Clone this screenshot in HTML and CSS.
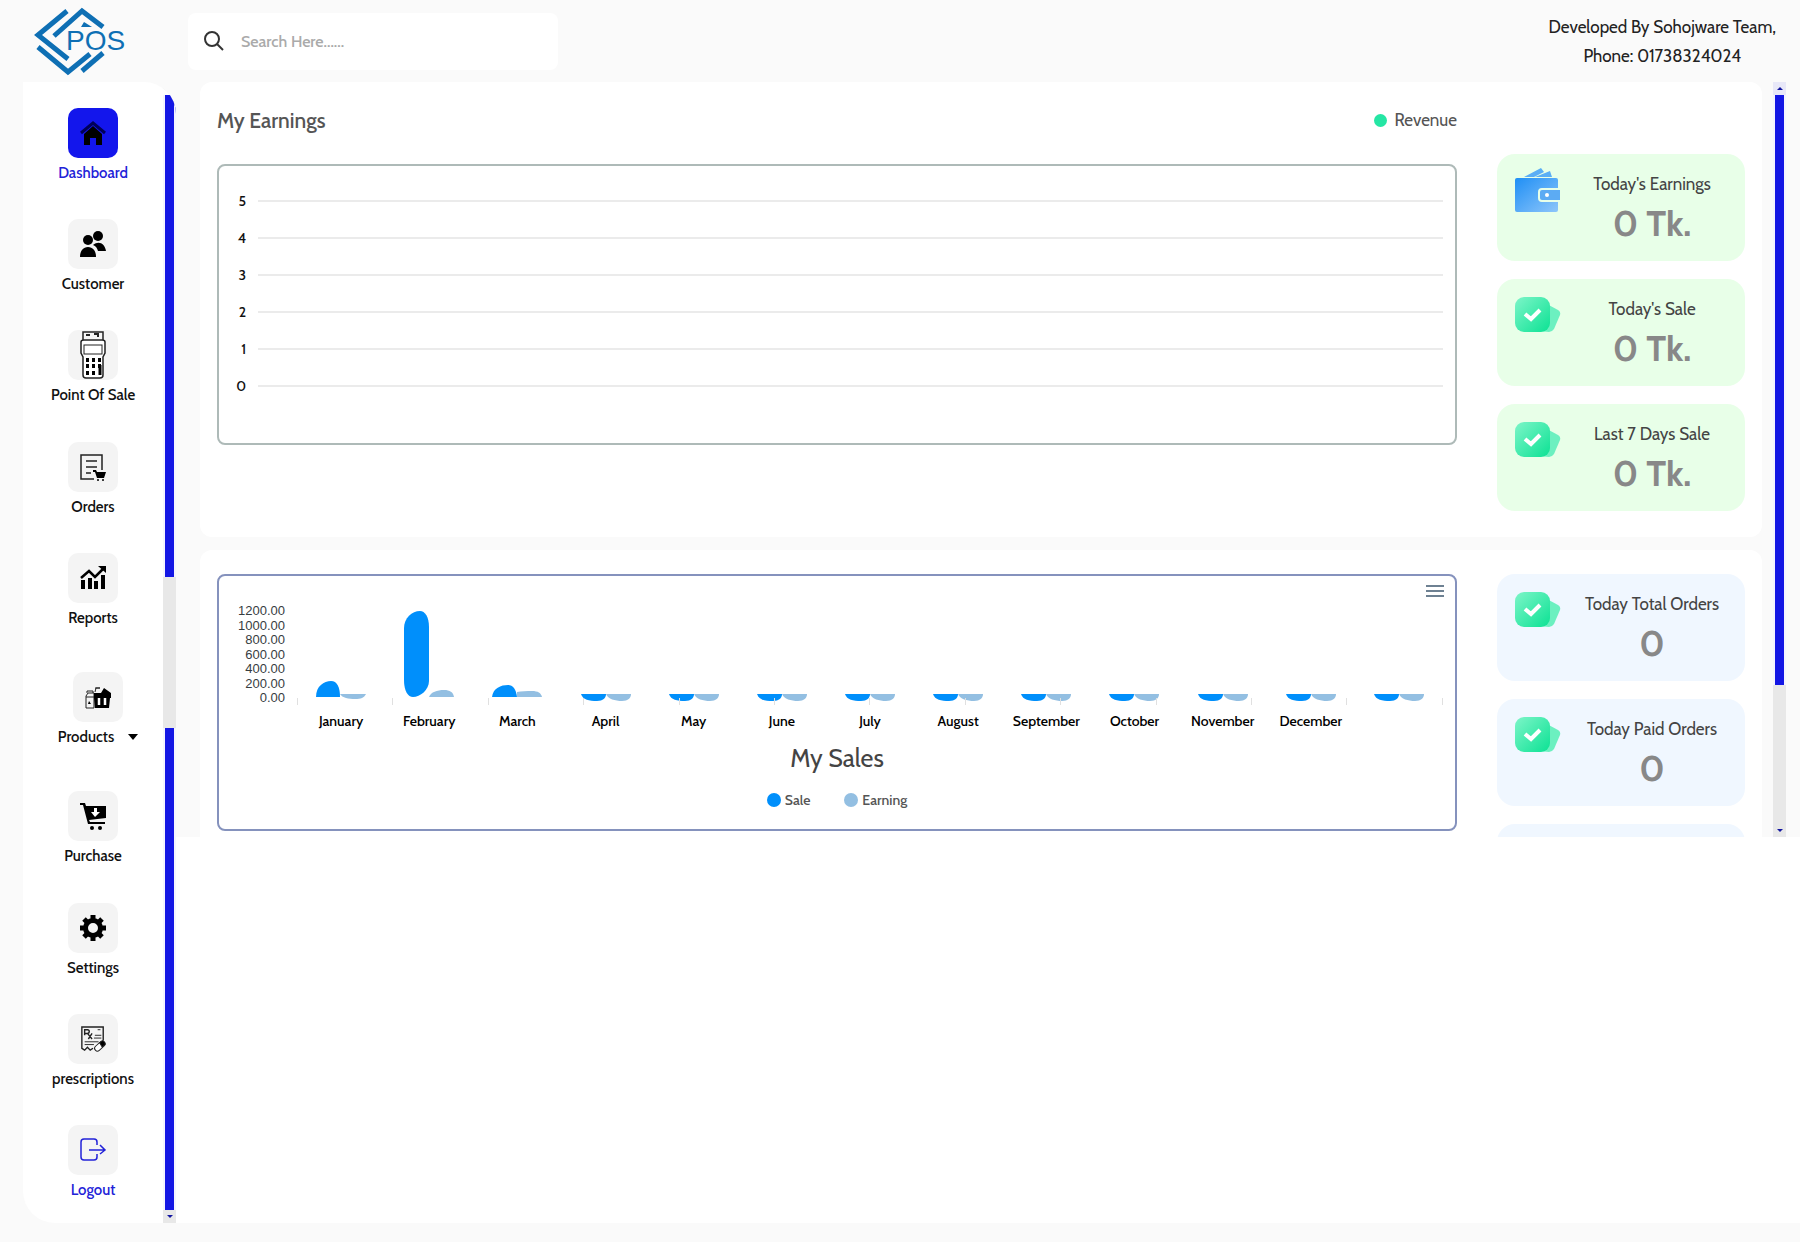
FILE: index.html
```html
<!DOCTYPE html>
<html lang="en">
<head>
  <meta charset="UTF-8">
  <meta name="viewport" content="width=device-width, initial-scale=1.0">
  <title>Dashboard - POS</title>
  <link rel="stylesheet" href="styles.css">
</head>
<body>
  <!-- shared shapes -->
  <svg class="defs" aria-hidden="true">
    <defs>
      <linearGradient id="green" x1="0" y1="0" x2="1" y2="1">
        <stop offset="0" stop-color="#7df5c8"/>
        <stop offset="1" stop-color="#0ce294"/>
      </linearGradient>
      <linearGradient id="blue" x1="0" y1="0" x2="1" y2="1">
        <stop offset="0" stop-color="#1f8ff5"/>
        <stop offset="1" stop-color="#8ec6fa"/>
      </linearGradient>
      <symbol id="check" viewBox="0 0 46 36">
        <path d="M30 6l13 7q3 2 2 5l-6 14q-2 3-5 3l-10-1z" fill="#6cf0c0"/>
        <rect width="35" height="35" rx="9" fill="url(#green)"/>
        <path d="M10 17l6 5 9-9" fill="none" stroke="#fff" stroke-width="4"/>
      </symbol>
      <symbol id="empty" viewBox="0 0 50 92">
        <path d="M0 84h25c0 4-3 7-9 7C8 91 2 90 0 84z" fill="#008ffb"/>
        <path d="M25 84h25c0 4-3 7-9 7-7 0-14-2-16-7z" fill="#93bfe2"/>
      </symbol>
    </defs>
  </svg>

  <header class="header">
    <a href="#" class="logo" aria-label="POS">
      <svg viewBox="0 0 100 68" width="100" height="68">
        <g fill="none" stroke="#0e6fb4" stroke-width="5">
          <path d="M33 4L4 28l30 24"/>
          <path d="M20 29L48 4l21 16"/>
          <path d="M4 40l30 25 22-18"/>
          <path d="M48 64l21-18"/>
        </g>
        <path d="M47 20l3-5 8 5z" fill="#0e6fb4"/>
        <text x="32" y="43" class="logo-text">POS</text>
      </svg>
    </a>
    <label class="search">
      <svg viewBox="0 0 20 20" width="20" height="20" fill="none" stroke="#333" stroke-width="2">
        <circle cx="8" cy="8" r="7"/>
        <path d="M13 13l6 6"/>
      </svg>
      <input type="text" placeholder="Search Here......" aria-label="Search">
    </label>
    <p class="credit">Developed By Sohojware Team,<br>Phone: 01738324024</p>
  </header>

  <div class="layout">
    <aside class="sidebar">
      <nav class="nav">
        <a href="#" class="nav-item active">
          <span class="tile">
            <svg viewBox="0 0 26 26">
              <path d="M1 13L13 3l12 10" fill="none" stroke="#000058" stroke-width="3"/>
              <path d="M4 14l9-8 9 8v11h-6v-7h-6v7H4z"/>
            </svg>
          </span>
          <span>Dashboard</span>
        </a>
        <a href="#" class="nav-item">
          <span class="tile">
            <svg viewBox="0 0 26 26">
              <circle cx="18" cy="5" r="5"/>
              <circle cx="8" cy="9" r="5"/>
              <path d="M0 26c0-6 3-10 8-10s8 4 8 10z"/>
              <path d="M13 14c6-5 12-1 13 6h-8c-1-3-2-5-5-6z"/>
            </svg>
          </span>
          <span>Customer</span>
        </a>
        <a href="#" class="nav-item">
          <span class="tile">
            <svg class="tall" viewBox="0 0 26 48" fill="none" stroke="#222">
              <path d="M3 9V1h20v8" stroke-width="1.5"/>
              <path d="M1 11q0-2 3-2h18q3 0 3 2v11l-2 4v18q0 3-3 3H6q-3 0-3-3V26l-2-4z" fill="#fff" stroke-width="1.5"/>
              <rect x="4" y="14" width="18" height="9"/>
              <path d="M6 4h4M14 3h5M17 5h2" stroke-width="2"/>
              <path d="M6 29h3m3 0h3m3 0h3M6 35h3m3 0h3m3 0h3M6 42h3m3 0h3" stroke="#000" stroke-width="4"/>
              <path d="M20 34v10" stroke="#000" stroke-width="3"/>
            </svg>
          </span>
          <span>Point Of Sale</span>
        </a>
        <a href="#" class="nav-item">
          <span class="tile">
            <svg viewBox="0 0 26 26">
              <path d="M14 25H1V1h21v15M6 7h11M6 13h11M6 19h5" fill="none" stroke="#222" stroke-width="1.5"/>
              <path d="M13 16h3l1 2h9l-2 6h-7l-2-6h-2z"/>
              <circle cx="18" cy="26" r="1"/>
              <circle cx="23" cy="26" r="1"/>
            </svg>
          </span>
          <span>Orders</span>
        </a>
        <a href="#" class="nav-item">
          <span class="tile">
            <svg viewBox="0 0 26 26">
              <path d="M1 15h4v9H1zM8 13h4v11H8zM14 16h4v8h-4zM21 10h4v14h-4z"/>
              <path d="M1 13l8-7 6 6 8-8" fill="none" stroke="#000" stroke-width="2.5"/>
              <path d="M18 1h8v7z"/>
            </svg>
          </span>
          <span>Reports</span>
        </a>
        <a href="#" class="nav-item dropdown">
          <span class="tile">
            <svg viewBox="0 0 26 26">
              <path d="M1 24V12l2-3h6v15zM1 13h8M2 9V7h6v2M10 8l1-4h4M10 4h5" fill="none" stroke="#222"/>
              <path d="M4 17l2 3H3z"/>
              <path d="M9 9h7l3-5 7 5v5h-1l-1 10H10L9 14z"/>
              <path d="M14 14v7M20 14v7" stroke="#fff" stroke-width="2.5"/>
            </svg>
          </span>
          <span class="dropdown-label">Products
            <svg class="caret" viewBox="0 0 10 6" width="10" height="6"><path d="M0 0h10L5 6z"/></svg>
          </span>
        </a>
        <a href="#" class="nav-item">
          <span class="tile">
            <svg viewBox="0 0 26 26">
              <path d="M0 0h5l1 3h20v12L9 17l1 2h15v2H8L3 2H0z"/>
              <path d="M14 5h3v4h3l-5 5-4-5h3z" fill="#fff"/>
              <circle cx="12" cy="25" r="2"/>
              <circle cx="20" cy="25" r="2"/>
            </svg>
          </span>
          <span>Purchase</span>
        </a>
        <a href="#" class="nav-item">
          <span class="tile">
            <svg viewBox="0 0 26 26" fill="none" stroke="#000">
              <circle cx="13" cy="13" r="7.5" stroke-width="5"/>
              <path d="M13 0v5M13 21v5M0 13h5M21 13h5M4 4l3 3M19 19l3 3M4 22l3-3M19 7l3-3" stroke-width="5"/>
            </svg>
          </span>
          <span>Settings</span>
        </a>
        <a href="#" class="nav-item">
          <span class="tile">
            <svg viewBox="0 0 26 28" fill="none" stroke="#222">
              <path d="M24 16V1H1v23l3 2 3-3 3 3 3-2" stroke-width="1.5"/>
              <path d="M4 10V4h3q2 0 2 2t-2 2H4m3 0l5 6m0-6l-4 6" stroke-width="1.5"/>
              <path d="M18 4h3M15 10h7M14 13h8M4 17h15M4 20h10"/>
              <rect x="14" y="19" width="13" height="6" rx="3" fill="#fff" transform="rotate(-42 20 22)"/>
              <path d="M20 18l3-2q4 1 3 4l-3 3z" fill="#000"/>
            </svg>
          </span>
          <span>prescriptions</span>
        </a>
        <a href="#" class="nav-item logout">
          <span class="tile">
            <svg viewBox="0 0 26 26" fill="none" stroke="#2222d8" stroke-width="1.5">
              <path d="M17 8V5q0-3-3-3H4Q1 2 1 5v15q0 3 3 3h10q3 0 3-3v-3"/>
              <path d="M9 13h16M20 8l5 5-5 4"/>
            </svg>
          </span>
          <span>Logout</span>
        </a>
      </nav>
      <div class="scrollbar">
        <span class="scroll-btn blank"></span>
        <span class="thumb"></span>
        <span class="track"></span>
        <span class="thumb"></span>
        <span class="scroll-btn"><svg viewBox="0 0 6 3" width="6" height="3"><path d="M0 0h6L3 3z"/></svg></span>
      </div>
    </aside>

    <main class="main">
      <div class="content">
        <div class="panels">
          <section class="panel earnings">
            <div class="panel-left">
              <div class="panel-head">
                <h2>My Earnings</h2>
                <span class="legend-item revenue"><i class="dot"></i>Revenue</span>
              </div>
              <div class="chart line-chart">
                <div class="grid-row"><span>5</span><hr></div>
                <div class="grid-row"><span>4</span><hr></div>
                <div class="grid-row"><span>3</span><hr></div>
                <div class="grid-row"><span>2</span><hr></div>
                <div class="grid-row"><span>1</span><hr></div>
                <div class="grid-row"><span>0</span><hr></div>
              </div>
            </div>
            <div class="stats">
              <div class="stat green">
                <svg viewBox="0 0 46 44" width="46" height="44">
                  <path d="M9 9L26 0l3 4-10 5zM20 9l15-6 2 6z" fill="#5aaef5"/>
                  <rect y="10" width="43" height="34" rx="2" fill="url(#blue)"/>
                  <path d="M46 21H27q-3 0-3 3v6q0 3 3 3h19z" fill="#5cabf3" stroke="#e8ffe8" stroke-width="2"/>
                  <circle cx="32" cy="27" r="2" fill="#fff"/>
                </svg>
                <div class="stat-text"><h3>Today's Earnings</h3><p>0 Tk.</p></div>
              </div>
              <div class="stat green">
                <svg class="check" width="46" height="36"><use href="#check"/></svg>
                <div class="stat-text"><h3>Today's Sale</h3><p>0 Tk.</p></div>
              </div>
              <div class="stat green">
                <svg class="check" width="46" height="36"><use href="#check"/></svg>
                <div class="stat-text"><h3>Last 7 Days Sale</h3><p>0 Tk.</p></div>
              </div>
            </div>
          </section>

          <section class="panel sales">
            <div class="panel-left">
              <div class="chart bar-chart">
                <button type="button" class="menu" aria-label="Menu">
                  <svg viewBox="0 0 18 12" width="18" height="12" stroke="#6e8192" stroke-width="2"><path d="M0 1h18M0 6h18M0 11h18"/></svg>
                </button>
                <div class="plot">
                  <div class="y-axis">
                    <span>1200.00</span><span>1000.00</span><span>800.00</span><span>600.00</span><span>400.00</span><span>200.00</span><span>0.00</span>
                  </div>
                  <div class="plot-area">
                    <div class="bars">
                      <svg viewBox="0 0 50 92">
                        <path d="M0 87C0 76 8 71 15 71c6 0 9 6 9 16z" fill="#008ffb"/>
                        <path d="M24 84h26c-2 4-5 5-11 5s-13-1-15-5z" fill="#93bfe2"/>
                      </svg>
                      <svg viewBox="0 0 50 92">
                        <path d="M0 18C0 8 8 1 16 1c5 0 9 6 9 16v54c0 9-9 16-16 16-5 0-9-6-9-17z" fill="#008ffb"/>
                        <path d="M25 87c2-5 8-7 15-7 6 0 9 2 10 7z" fill="#93bfe2"/>
                      </svg>
                      <svg viewBox="0 0 50 92">
                        <path d="M0 87c1-9 9-12 16-12 5 0 8 4 9 12z" fill="#008ffb"/>
                        <path d="M25 87v-5c4-1 10-1 15-1 6 0 9 2 10 6z" fill="#93bfe2"/>
                      </svg>
                      <svg><use href="#empty"/></svg>
                      <svg><use href="#empty"/></svg>
                      <svg><use href="#empty"/></svg>
                      <svg><use href="#empty"/></svg>
                      <svg><use href="#empty"/></svg>
                      <svg><use href="#empty"/></svg>
                      <svg><use href="#empty"/></svg>
                      <svg><use href="#empty"/></svg>
                      <svg><use href="#empty"/></svg>
                      <svg><use href="#empty"/></svg>
                    </div>
                    <div class="ticks"><i></i><i></i><i></i><i></i><i></i><i></i><i></i><i></i><i></i><i></i><i></i><i></i><i></i></div>
                    <div class="months">
                      <span>January</span><span>February</span><span>March</span><span>April</span><span>May</span><span>June</span><span>July</span><span>August</span><span>September</span><span>October</span><span>November</span><span>December</span><span></span>
                    </div>
                  </div>
                </div>
                <h2 class="chart-title">My Sales</h2>
                <div class="legend">
                  <span class="legend-item sale"><i class="dot"></i>Sale</span>
                  <span class="legend-item earning"><i class="dot"></i>Earning</span>
                </div>
              </div>
            </div>
            <div class="stats">
              <div class="stat blue">
                <svg class="check" width="46" height="36"><use href="#check"/></svg>
                <div class="stat-text"><h3>Today Total Orders</h3><p>0</p></div>
              </div>
              <div class="stat blue">
                <svg class="check" width="46" height="36"><use href="#check"/></svg>
                <div class="stat-text"><h3>Today Paid Orders</h3><p>0</p></div>
              </div>
              <div class="stat blue"></div>
            </div>
          </section>
        </div>
        <div class="scrollbar">
          <span class="scroll-btn up"><svg viewBox="0 0 6 3" width="6" height="3"><path d="M0 3h6L3 0z"/></svg></span>
          <span class="thumb"></span>
          <span class="track"></span>
          <span class="scroll-btn"><svg viewBox="0 0 6 3" width="6" height="3"><path d="M0 0h6L3 3z"/></svg></span>
        </div>
      </div>
    </main>
  </div>
</body>
</html>
```
FILE: styles.css
```css
* {
  box-sizing: border-box;
}
body {
  margin: 0;
  min-height: 100vh;
  background-color: #fafafa;
  color: #111;
  font-family: Cabin, Lato, "Open Sans", sans-serif;
  font-size: 15px;
  font-weight: 500;
}
h2, h3, p {
  margin: 0;
  font-weight: 500;
}
a {
  color: inherit;
  text-decoration: none;
}
.defs {
  position: absolute;
  width: 0;
  height: 0;
}

/* header */
.header {
  display: flex;
  align-items: center;
  height: 82px;
  padding: 0 24px 0 34px;
}
.logo {
  width: 154px;
  height: 68px;
}
.logo svg {
  overflow: visible;
}
.logo-text {
  font-family: "Liberation Sans", sans-serif;
  font-size: 28px;
  font-weight: 400;
  fill: #0e6fb4;
}
.search {
  display: flex;
  align-items: center;
  gap: 17px;
  width: 370px;
  height: 57px;
  padding: 0 16px;
  border-radius: 8px;
  background-color: #fff;
}
.search input {
  flex: 1;
  min-width: 0;
  padding: 0;
  border: 0;
  outline: 0;
  background: none;
  font: inherit;
  font-size: 16px;
}
.search input::placeholder {
  color: #aaa;
}
.credit {
  margin-left: auto;
  padding-top: 2px;
  font-size: 17px;
  font-weight: 400;
  line-height: 29px;
  text-align: center;
  color: #222;
}

/* layout */
.layout {
  display: flex;
  min-height: calc(100vh - 101px);
  padding-left: 23px;
  margin-bottom: 19px;
}
.main {
  flex: 1;
  min-width: 0;
  background-color: #fff;
}

/* sidebar */
.sidebar {
  display: flex;
  width: 153px;
  overflow: hidden;
  border-radius: 0 32px 0 32px;
  background-color: #fff;
}
.nav {
  flex: 1;
  display: flex;
  flex-direction: column;
  justify-content: space-between;
  padding: 26px 0 21px;
}
.nav-item {
  display: flex;
  flex-direction: column;
  align-items: center;
  gap: 3px;
  line-height: 24px;
}
.tile {
  display: flex;
  align-items: center;
  justify-content: center;
  width: 50px;
  height: 50px;
  border-radius: 10px;
  background-color: #f4f4f4;
}
.tile svg {
  width: 26px;
  height: 26px;
  overflow: visible;
}
.tile .tall {
  height: 48px;
}
.active,
.logout {
  color: #2222d8;
}
.active .tile {
  background-color: #1316ec;
}
.dropdown {
  margin: 8px 0;
  padding-left: 10px;
}
.dropdown-label {
  display: flex;
  align-items: center;
  gap: 14px;
}

/* scrollbars */
.scrollbar {
  display: flex;
  flex-direction: column;
  width: 13px;
  background-color: #e8e8e8;
}
.scroll-btn {
  display: flex;
  align-items: center;
  justify-content: center;
  height: 13px;
  fill: #1316a0;
}
.blank {
  background-color: #fff;
}
.up {
  background-color: #e8e8f8;
}
.thumb {
  flex: 482;
  border: solid #f4f4ff;
  border-width: 0 2px;
  background-color: #1316e4;
}
.track {
  flex: 152;
}
.content .thumb {
  flex: 590;
}
.content .track {
  flex: 139;
}

/* content */
.content {
  display: flex;
  gap: 11px;
  height: calc(100vh - 487px);
  padding: 0 14px 0 24px;
  overflow: hidden;
  background-color: #fafafa;
}
.panels {
  flex: 1;
  min-width: 0;
}
.panel {
  display: flex;
  gap: 40px;
  padding: 0 17px 26px;
  border-radius: 12px;
  background-color: #fff;
}
.panel-left {
  flex: 1;
  min-width: 0;
}
.earnings .stats {
  padding-top: 72px;
}
.sales {
  margin-top: 13px;
  padding-top: 24px;
}
.panel-head {
  display: flex;
  align-items: center;
  justify-content: space-between;
  height: 76px;
  margin-bottom: 6px;
}
.panel-head h2 {
  font-size: 21px;
  color: #555;
}
.legend-item {
  display: flex;
  align-items: center;
  gap: 4px;
  color: #555;
}
.dot {
  width: 14px;
  height: 14px;
  border-radius: 50%;
  background-color: #008ffb;
}
.revenue {
  gap: 7px;
  font-size: 17px;
  font-weight: 400;
}
.revenue .dot {
  width: 13px;
  height: 13px;
  background-color: #25e6a4;
}
.earning .dot {
  background-color: #93bfe2;
}
.chart {
  border: 2px solid #aebab8;
  border-radius: 8px;
}
.line-chart {
  height: 281px;
  padding: 16px 12px 0 16px;
}
.grid-row {
  display: flex;
  align-items: center;
  gap: 12px;
  height: 37px;
  font-size: 14px;
}
.grid-row span {
  width: 11px;
  text-align: right;
}
.grid-row hr {
  flex: 1;
  height: 2px;
  margin: 0;
  border: 0;
  background-color: #ebebeb;
}

/* sales chart */
.bar-chart {
  position: relative;
  height: 257px;
  padding: 28px 12px 0;
  border-color: #8592bd;
}
.menu {
  position: absolute;
  top: 9px;
  right: 11px;
  display: flex;
  padding: 0;
  border: 0;
  background: none;
}
.plot {
  display: flex;
  gap: 12px;
}
.y-axis {
  display: flex;
  flex-direction: column;
  justify-content: space-between;
  width: 54px;
  height: 101px;
  font: 13px/14px "Liberation Sans", sans-serif;
  text-align: right;
  color: #373d3f;
}
.plot-area {
  flex: 1;
}
.bars,
.months {
  display: grid;
  grid-template-columns: repeat(13, 1fr);
  justify-items: center;
}
.bars {
  padding-top: 6px;
}
.bars svg {
  width: 50px;
  height: 92px;
}
.ticks {
  display: flex;
  justify-content: space-between;
  margin-top: -4px;
}
.ticks i {
  width: 1px;
  height: 7px;
  background-color: #e0e0e0;
}
.months {
  margin-top: 6px;
  font-size: 14px;
  line-height: 20px;
  color: #000;
}
.chart-title {
  margin-top: 11px;
  font-size: 25px;
  font-weight: 400;
  line-height: 32px;
  text-align: center;
  color: #444;
}
.legend {
  display: flex;
  justify-content: center;
  gap: 34px;
  margin-top: 16px;
  font-size: 14px;
  line-height: 20px;
}

/* stat cards */
.stats {
  display: flex;
  flex-direction: column;
  gap: 18px;
  width: 248px;
}
.stat {
  display: flex;
  align-items: flex-start;
  height: 107px;
  padding: 14px 18px;
  border-radius: 18px;
}
.stat .check {
  margin-top: 4px;
}
.green {
  background-color: #e8ffe8;
}
.blue {
  background-color: #f0f7ff;
}
.stat-text {
  flex: 1;
  padding-left: 16px;
  text-align: center;
  white-space: nowrap;
}
.stat-text h3 {
  font-size: 17px;
  font-weight: 400;
  line-height: 32px;
  color: #444;
}
.stat-text p {
  font-size: 36px;
  font-weight: 700;
  line-height: 46px;
  color: #888;
}
```
